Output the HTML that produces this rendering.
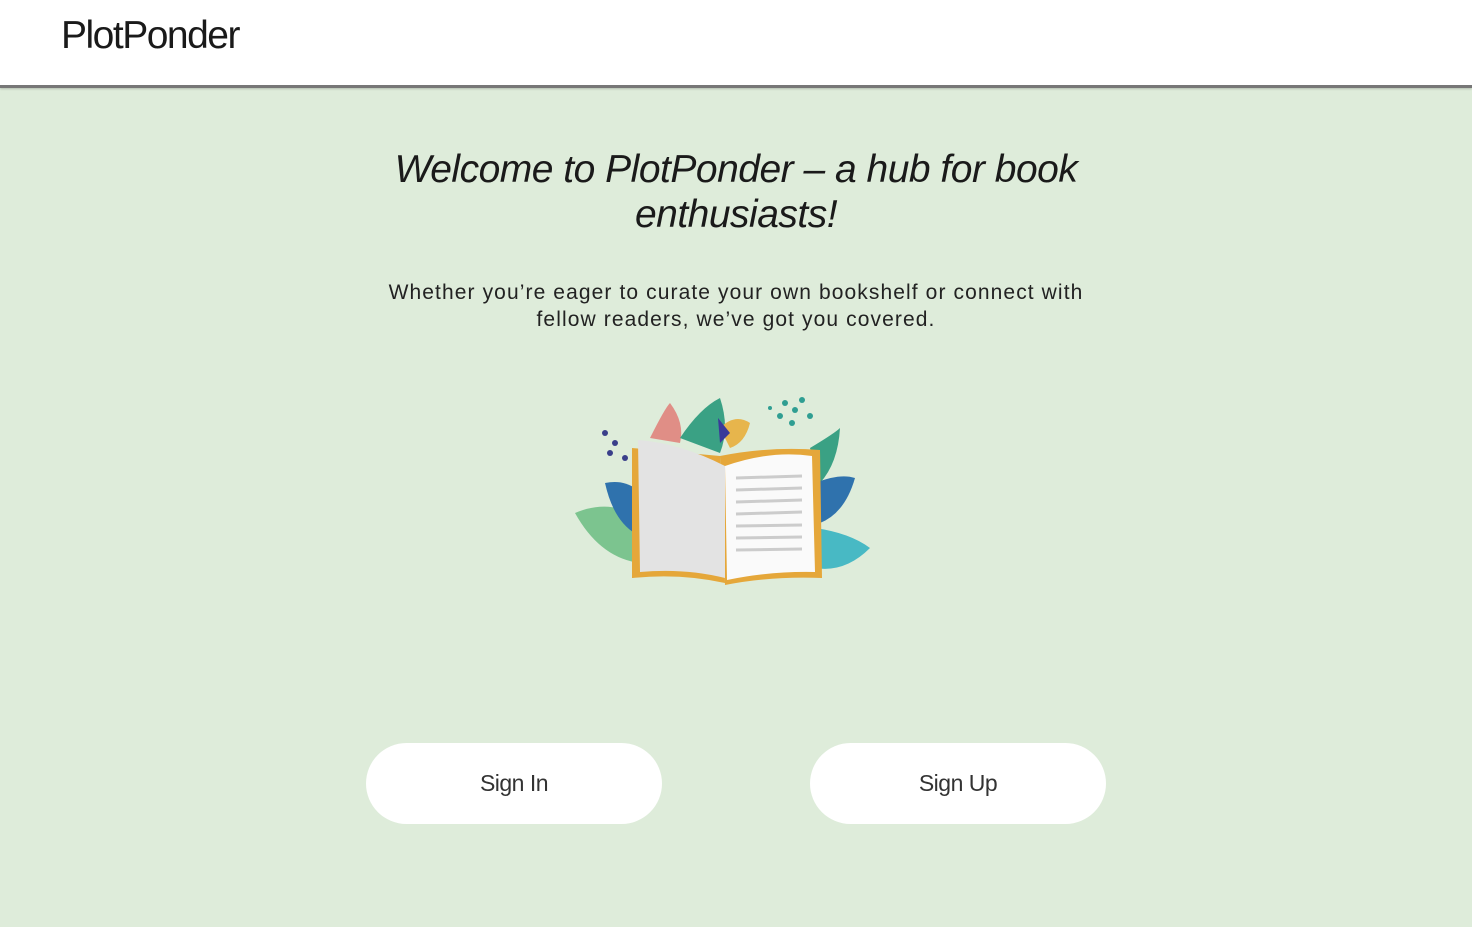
<!DOCTYPE html>
<html><head><meta charset="utf-8"><style>
*{margin:0;padding:0;box-sizing:border-box}
body{width:1472px;height:927px;background:#deecda;font-family:"Liberation Sans",sans-serif;color:#222;position:relative;overflow:hidden}
.hdr{position:absolute;left:0;top:0;width:1472px;height:88px;background:#fff;border-bottom:3px solid #777;box-shadow:0 1px 2px rgba(0,0,0,.2)}
.logo{position:absolute;left:61px;top:14px;font-size:39px;letter-spacing:-1.5px;color:#1a1a1a}
h1{position:absolute;left:336px;width:800px;top:147px;text-align:center;font-weight:normal;font-style:italic;font-size:39px;line-height:45px;letter-spacing:-0.5px;color:#1a1a1a}
p{position:absolute;left:286px;width:900px;top:279px;text-align:center;font-size:21px;line-height:27px;color:#222;letter-spacing:1.1px}
.btn{position:absolute;top:743px;width:296px;height:81px;background:#fff;border-radius:41px;text-align:center;line-height:81px;font-size:23px;color:#333;letter-spacing:-0.5px}
</style></head><body>
<div class="hdr"><div class="logo">PlotPonder</div></div>
<h1>Welcome to PlotPonder – a hub for book enthusiasts!</h1>
<p>Whether you’re eager to curate your own bookshelf or connect with<br>fellow readers, we’ve got you covered.</p>
<svg style="position:absolute;left:570px;top:388px" width="305" height="200" viewBox="0 0 305 200">
<path d="M5 125 Q40 110 70 130 L70 175 Q30 170 5 125Z" fill="#7cc48f"/>
<path d="M35 95 Q60 90 75 110 L75 150 Q45 140 35 95Z" fill="#2f72ad"/>
<path d="M80 50 Q95 20 100 15 Q115 35 110 55Z" fill="#e08e86"/>
<path d="M110 50 Q130 20 150 10 Q160 40 150 65Z" fill="#3aa184"/>
<path d="M150 40 Q165 25 180 35 Q175 55 160 60Z" fill="#e7b54c"/>
<path d="M148 30 L160 45 L150 55Z" fill="#3a3a9a"/>
<g fill="#2f9e92"><circle cx="215" cy="15" r="3"/><circle cx="225" cy="22" r="3"/><circle cx="210" cy="28" r="3"/><circle cx="232" cy="12" r="3"/><circle cx="222" cy="35" r="3"/><circle cx="240" cy="28" r="3"/><circle cx="200" cy="20" r="2"/></g>
<g fill="#3a3f8a"><circle cx="35" cy="45" r="3"/><circle cx="45" cy="55" r="3"/><circle cx="40" cy="65" r="3"/><circle cx="55" cy="70" r="3"/></g>
<path d="M240 60 Q265 45 270 40 Q268 75 250 95Z" fill="#3aa184"/>
<path d="M245 95 Q270 85 285 90 Q275 125 250 135Z" fill="#2f72ad"/>
<path d="M245 140 Q280 145 300 160 Q275 185 245 180Z" fill="#48b9c4"/>
<path d="M62 60 L150 68 L155 195 Q110 185 62 190Z" fill="#e5a73a"/>
<path d="M150 68 Q200 58 250 62 L252 190 Q200 188 155 197Z" fill="#e5a73a"/>
<path d="M68 52 Q110 55 155 78 L155 190 Q115 180 70 184Z" fill="#e3e3e3"/>
<path d="M155 78 Q200 62 242 68 L245 184 Q200 183 157 192Z" fill="#fafafa"/>
<g stroke="#ccc" stroke-width="3"><line x1="166" y1="90" x2="232" y2="88"/><line x1="166" y1="102" x2="232" y2="100"/><line x1="166" y1="114" x2="232" y2="112"/><line x1="166" y1="126" x2="232" y2="124"/><line x1="166" y1="138" x2="232" y2="137"/><line x1="166" y1="150" x2="232" y2="149"/><line x1="166" y1="162" x2="232" y2="161"/></g>
</svg>
<div class="btn" style="left:366px">Sign In</div>
<div class="btn" style="left:810px">Sign Up</div>
</body></html>
